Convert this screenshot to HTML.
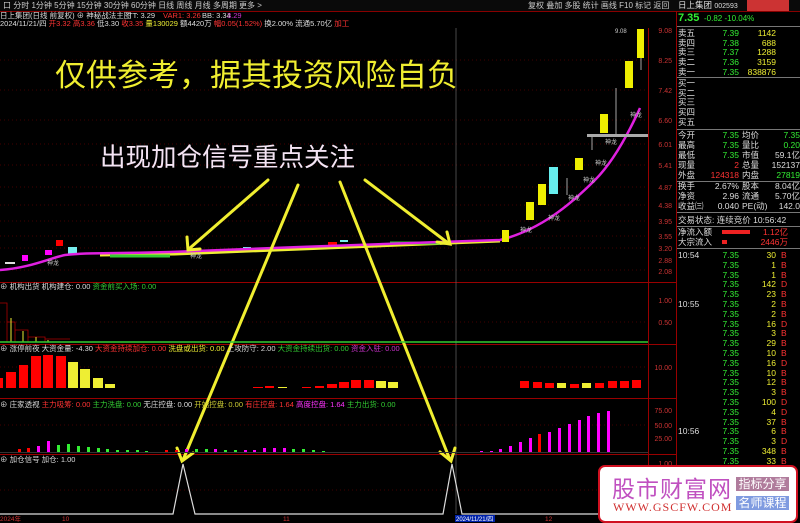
<!DOCTYPE html>
<html><head><meta charset="utf-8"><style>
*{margin:0;padding:0}
body{width:800px;height:522px;background:#000;overflow:hidden;position:relative;font-family:"Liberation Sans","Noto Sans CJK SC",sans-serif}
svg{position:absolute;left:0;top:0}
text{font-family:"Liberation Sans","Noto Sans CJK SC",sans-serif}
.w{position:absolute;left:677px;width:123px;height:10px;line-height:10px;font-size:8.5px;color:#ddd;white-space:nowrap}
.w span{position:absolute}
.l{left:1px}
.p{right:61px;color:#3e3}
.v{right:24px;color:#ee3}
.f{left:104px;color:#f33}
.l2{left:65px}
.v2{right:0;}
.hl{position:absolute;left:677px;width:123px;height:1px;background:#777}
</style></head><body>
<svg width="800" height="522" viewBox="0 0 800 522">
<rect x="0" y="0" width="800" height="11" fill="#0a0a0a"/>
<g font-size="8" fill="#ccc">
<text x="3" y="8">口 分时  1分钟  5分钟  15分钟  30分钟  60分钟  日线  周线  月线  多周期  更多 &gt;</text>
<text x="528" y="8">复权  叠加  多股  统计  画线  F10  标记  返回</text>
</g>
<line x1="0" y1="11.5" x2="800" y2="11.5" stroke="#800" stroke-width="1"/>
<g font-size="7.5">
<text x="0" y="18" fill="#ddd">日上集团(日线 前复权) ⊕ 神秘战法主图</text>
<text x="128" y="18" fill="#ddd">TT: 3.29</text><text x="163" y="18" fill="#f33">VAR1: 3.26</text><text x="202" y="18" fill="#ddd">BB: 3.34</text><text x="227" y="18" fill="#c3c">3.29</text>
<text x="0" y="26" fill="#ddd">2024/11/21/四 <tspan fill="#f33">开3.32 高3.36</tspan> 低3.30 <tspan fill="#f33">收3.35</tspan> <tspan fill="#ee3">量130029</tspan> 额4420万 <tspan fill="#f33">幅0.05(1.52%)</tspan> 换2.00% 流通5.70亿 <tspan fill="#f33">加工</tspan></text>
</g>
<g stroke="#5a0000" stroke-width="0.8" stroke-dasharray="1,3">
<line x1="0" y1="60" x2="648" y2="60"/><line x1="0" y1="90" x2="648" y2="90"/><line x1="0" y1="120" x2="648" y2="120"/><line x1="0" y1="144" x2="648" y2="144"/><line x1="0" y1="165" x2="648" y2="165"/><line x1="0" y1="187" x2="648" y2="187"/><line x1="0" y1="205" x2="648" y2="205"/><line x1="0" y1="221" x2="648" y2="221"/><line x1="0" y1="236" x2="648" y2="236"/><line x1="0" y1="248" x2="648" y2="248"/><line x1="0" y1="270" x2="648" y2="270"/>
<line x1="0" y1="322" x2="648" y2="322"/><line x1="0" y1="367" x2="648" y2="367"/><line x1="0" y1="425" x2="648" y2="425"/><line x1="0" y1="490" x2="648" y2="490"/>
</g>
<g stroke="#900" stroke-width="1">
<line x1="0" y1="282.5" x2="676" y2="282.5"/><line x1="0" y1="344.5" x2="676" y2="344.5"/><line x1="0" y1="398.5" x2="676" y2="398.5"/><line x1="0" y1="454.5" x2="676" y2="454.5"/>
<line x1="648.5" y1="28" x2="648.5" y2="515"/><line x1="676.5" y1="11" x2="676.5" y2="522"/>
</g>
<line x1="456" y1="28" x2="456" y2="514" stroke="#666" stroke-width="0.7"/>
<g font-size="7" fill="#c33" text-anchor="end">
<text x="672" y="33">9.08</text><text x="672" y="63">8.25</text><text x="672" y="93">7.42</text><text x="672" y="123">6.60</text><text x="672" y="147">6.01</text><text x="672" y="168">5.41</text><text x="672" y="190">4.87</text><text x="672" y="208">4.38</text><text x="672" y="224">3.95</text><text x="672" y="239">3.55</text><text x="672" y="251">3.20</text><text x="672" y="263">2.88</text><text x="672" y="274">2.08</text>
<text x="672" y="303">1.00</text><text x="672" y="325">0.50</text><text x="672" y="370">10.00</text><text x="672" y="413">75.00</text><text x="672" y="428">50.00</text><text x="672" y="441">25.00</text><text x="672" y="466">1.00</text>
</g>
<g>
<rect x="22" y="255" width="6" height="6" fill="#f0f"/><rect x="45" y="250" width="7" height="5" fill="#f0f"/><rect x="56" y="240" width="7" height="6" fill="#f00"/><rect x="68" y="247" width="9" height="7" fill="#7ee"/><rect x="230" y="249" width="8" height="4" fill="#f00"/><rect x="243" y="247" width="8" height="4" fill="#7ee"/><rect x="328" y="242" width="9" height="4" fill="#f00"/><rect x="340" y="240" width="8" height="2" fill="#7ee"/>
<path d="M100 255 L175 254 L500 241" stroke="#ee3" stroke-width="3" fill="none"/>
<path d="M110 256 L170 256 M390 243 L440 243" stroke="#3c3" stroke-width="3"/>
<rect x="5" y="262" width="10" height="2" fill="#ddd"/>
</g>
<path d="M0 270 C30 268 50 258 65 255 C90 252 110 254 170 252 L300 247 L440 242 L500 240 C540 230 570 205 595 180 C615 160 630 130 640 108" stroke="#e020e0" stroke-width="2.5" fill="none"/>
<g fill="#ee0">
<rect x="502" y="230" width="7" height="12"/><rect x="526" y="202" width="8" height="18"/><rect x="538" y="184" width="8" height="21"/><rect x="575" y="158" width="8" height="12"/><rect x="600" y="114" width="8" height="19"/><rect x="625" y="61" width="8" height="27"/><rect x="637" y="29" width="7" height="29"/>
</g>
<rect x="549" y="167" width="9" height="27" fill="#6ee"/>
<rect x="587" y="134" width="61" height="3" fill="#aaa"/>
<g stroke="#ccc" stroke-width="0.8"><line x1="616" y1="88" x2="616" y2="134"/><line x1="567" y1="178" x2="567" y2="195"/><line x1="592" y1="137" x2="592" y2="150"/><line x1="641" y1="58" x2="641" y2="70"/></g>
<text x="615" y="33" font-size="6" fill="#ccc">9.08</text>
<g font-size="6" fill="#ccc"><text x="520" y="232">神龙</text><text x="548" y="220">神龙</text><text x="568" y="200">神龙</text><text x="583" y="182">神龙</text><text x="595" y="165">神龙</text><text x="605" y="144">神龙</text><text x="630" y="117">神龙</text><text x="47" y="265">神龙</text><text x="190" y="258">神龙</text></g>
<text x="55" y="86" font-size="31" fill="#f0ee30">仅供参考，据其投资风险自负</text>
<text x="100" y="166" font-size="25.5" fill="#f4e4f4">出现加仓信号重点关注</text>
<g stroke="#f0ee30" stroke-width="3" fill="none" stroke-linecap="round">
<line x1="268" y1="180" x2="190" y2="248"/><path d="M187 237 L188 250 L200 249"/>
<line x1="298" y1="185" x2="183" y2="460"/><path d="M177 448 L182 461 L193 453"/>
<line x1="340" y1="182" x2="450" y2="460"/><path d="M440 452 L451 461 L455 448"/>
<line x1="365" y1="180" x2="448" y2="243"/><path d="M437 242 L450 244 L447 232"/>
</g>
<g font-size="7.5"><text x="0" y="289" fill="#ddd">⊕ 机构出货  机构建仓: 0.00 <tspan fill="#3c3">资金前买入场: 0.00</tspan></text></g>
<g stroke="#a00" fill="none" stroke-width="0.8"><path d="M0 303 H7 V342 M7 322 H15 V342 M15 330 H28 V342 M28 337 H45 V342 M45 339 H70"/></g>
<g stroke="#ee3" stroke-width="1"><line x1="11" y1="318" x2="11" y2="342"/><line x1="23" y1="331" x2="23" y2="342"/><line x1="36" y1="337" x2="36" y2="342"/><line x1="48" y1="340" x2="48" y2="342"/></g>
<line x1="0" y1="342" x2="648" y2="342" stroke="#3c3" stroke-width="1.5"/>
<g font-size="7.5"><text x="0" y="351" fill="#ddd">⊕ 涨停前夜  大资金量: -4.30  <tspan fill="#f33">大资金持续加仓: 0.00</tspan> <tspan fill="#ee3">洗盘或出货: 0.00</tspan> <tspan fill="#ddd">上攻防守: 2.00</tspan> <tspan fill="#3c3">大资金持续出货: 0.00</tspan> <tspan fill="#c3c">资金入驻: 0.00</tspan></text></g>
<g fill="#f00"><rect x="0" y="378" width="3" height="10"/><rect x="6" y="372" width="10" height="16"/><rect x="19" y="365" width="9" height="23"/><rect x="31" y="356" width="10" height="32"/><rect x="43" y="355" width="10" height="33"/><rect x="56" y="356" width="10" height="32"/>
<rect x="253" y="387" width="10" height="1"/><rect x="265" y="386" width="9" height="2"/><rect x="302" y="387" width="9" height="1"/><rect x="315" y="386" width="9" height="2"/><rect x="327" y="384" width="10" height="4"/><rect x="339" y="382" width="10" height="6"/><rect x="351" y="380" width="10" height="8"/><rect x="364" y="380" width="10" height="8"/>
<rect x="520" y="381" width="9" height="7"/><rect x="533" y="382" width="9" height="6"/><rect x="545" y="383" width="9" height="5"/><rect x="570" y="384" width="9" height="4"/><rect x="595" y="383" width="9" height="5"/><rect x="608" y="381" width="9" height="7"/><rect x="620" y="381" width="9" height="7"/><rect x="632" y="380" width="9" height="8"/></g>
<g fill="#ee3"><rect x="68" y="362" width="10" height="26"/><rect x="80" y="369" width="10" height="19"/><rect x="93" y="378" width="10" height="10"/><rect x="105" y="384" width="10" height="4"/><rect x="278" y="387" width="9" height="1"/><rect x="376" y="381" width="10" height="7"/><rect x="388" y="382" width="10" height="6"/><rect x="557" y="383" width="9" height="5"/><rect x="582" y="383" width="9" height="5"/></g>
<g font-size="7.5"><text x="0" y="407" fill="#ddd">⊕ 庄家透视  <tspan fill="#f33">主力吸筹: 0.00</tspan> <tspan fill="#3c3">主力洗盘: 0.00</tspan>   <tspan fill="#ddd">无庄控盘: 0.00</tspan> <tspan fill="#cc3">开始控盘: 0.00</tspan> <tspan fill="#f33">有庄控盘: 1.64</tspan> <tspan fill="#f3f">高度控盘: 1.64</tspan> <tspan fill="#3c3">主力出货: 0.00</tspan></text></g>
<g>
<rect x="18" y="449" width="3" height="3" fill="#f00"/><rect x="27" y="448" width="3" height="4" fill="#f00"/><rect x="37" y="446" width="3" height="6" fill="#f0f"/><rect x="47" y="441" width="3" height="11" fill="#f0f"/><rect x="57" y="445" width="3" height="7" fill="#3e3"/><rect x="67" y="444" width="3" height="8" fill="#3e3"/><rect x="77" y="446" width="3" height="6" fill="#3e3"/><rect x="87" y="447" width="3" height="5" fill="#3e3"/><rect x="97" y="448" width="3" height="4" fill="#3e3"/><rect x="106" y="449" width="3" height="3" fill="#3e3"/><rect x="116" y="450" width="3" height="2" fill="#3e3"/><rect x="126" y="450" width="3" height="2" fill="#3e3"/><rect x="136" y="450" width="3" height="2" fill="#3e3"/><rect x="145" y="451" width="3" height="1" fill="#3e3"/>
<rect x="165" y="450" width="3" height="2" fill="#f00"/><rect x="175" y="450" width="3" height="2" fill="#f00"/><rect x="185" y="449" width="3" height="3" fill="#f0f"/><rect x="195" y="449" width="3" height="3" fill="#3e3"/><rect x="205" y="449" width="3" height="3" fill="#3e3"/><rect x="214" y="449" width="3" height="3" fill="#f0f"/><rect x="224" y="450" width="3" height="2" fill="#3e3"/><rect x="234" y="450" width="3" height="2" fill="#3e3"/><rect x="244" y="450" width="3" height="2" fill="#f0f"/><rect x="253" y="450" width="3" height="2" fill="#f0f"/><rect x="263" y="448" width="3" height="4" fill="#f0f"/><rect x="273" y="448" width="3" height="4" fill="#f0f"/><rect x="283" y="448" width="3" height="4" fill="#f0f"/><rect x="292" y="449" width="3" height="3" fill="#3e3"/><rect x="302" y="449" width="3" height="3" fill="#3e3"/><rect x="312" y="450" width="3" height="2" fill="#3e3"/><rect x="322" y="451" width="3" height="1" fill="#3e3"/>
<rect x="480" y="451" width="3" height="1" fill="#f0f"/><rect x="490" y="451" width="3" height="1" fill="#f0f"/><rect x="499" y="449" width="3" height="3" fill="#f0f"/><rect x="509" y="446" width="3" height="6" fill="#f0f"/><rect x="519" y="442" width="3" height="10" fill="#f0f"/><rect x="529" y="438" width="3" height="14" fill="#f0f"/><rect x="538" y="434" width="3" height="18" fill="#f00"/><rect x="548" y="432" width="3" height="20" fill="#f0f"/><rect x="558" y="428" width="3" height="24" fill="#f0f"/><rect x="568" y="424" width="3" height="28" fill="#f0f"/><rect x="578" y="420" width="3" height="32" fill="#f0f"/><rect x="587" y="416" width="3" height="36" fill="#f0f"/><rect x="597" y="413" width="3" height="39" fill="#f0f"/><rect x="607" y="411" width="3" height="41" fill="#f0f"/>
</g>
<line x1="0" y1="452.5" x2="648" y2="452.5" stroke="#333"/>
<text x="0" y="462" font-size="7.5" fill="#ddd">⊕ 加仓信号  加仓: 1.00</text>
<path d="M0 514 L173 514 L183 464 L195 514 L443 514 L452 464 L462 514 L648 514" stroke="#ddd" stroke-width="1.2" fill="none"/>
<g font-size="6.5" fill="#c33"><text x="0" y="521">2024年</text><text x="62" y="521">10</text><text x="283" y="521">11</text><text x="545" y="521">12</text></g>
<rect x="455" y="515" width="40" height="7" fill="#0022aa"/><text x="456" y="521" font-size="6" fill="#fff">2024/11/21/四</text>
</svg>

<!-- right panel -->
<div style="position:absolute;left:747px;top:0;width:42px;height:11px;background:#c33"></div>
<div class="w" style="top:0"><span class="l">日上集团 <span style="position:static;font-size:7px">002593</span></span></div>
<div class="w" style="top:12px;height:13px;line-height:13px"><span class="l" style="color:#3e3;font-size:11px;font-weight:bold">7.35</span><span style="left:27px;color:#3e3;font-size:8px">-0.82 -10.04%</span></div>
<div class="hl" style="top:26px"></div>

<div class="w" style="top:28px"><span class="l">卖五</span><span class="p">7.39</span><span class="v">1142</span></div>
<div class="w" style="top:38px"><span class="l">卖四</span><span class="p">7.38</span><span class="v">688</span></div>
<div class="w" style="top:47px"><span class="l">卖三</span><span class="p">7.37</span><span class="v">1288</span></div>
<div class="w" style="top:57px"><span class="l">卖二</span><span class="p">7.36</span><span class="v">3159</span></div>
<div class="w" style="top:67px"><span class="l">卖一</span><span class="p">7.35</span><span class="v">838876</span></div>
<div class="hl" style="top:77px"></div>
<div class="w" style="top:78px"><span class="l">买一</span></div>
<div class="w" style="top:88px"><span class="l">买二</span></div>
<div class="w" style="top:97px"><span class="l">买三</span></div>
<div class="w" style="top:107px"><span class="l">买四</span></div>
<div class="w" style="top:117px"><span class="l">买五</span></div>
<div class="hl" style="top:129px"></div>
<div class="w" style="top:130px"><span class="l">今开</span><span class="p">7.35</span><span class="l2">均价</span><span class="v2" style="color:#3e3">7.35</span></div>
<div class="w" style="top:140px"><span class="l">最高</span><span class="p">7.35</span><span class="l2">量比</span><span class="v2" style="color:#3e3">0.20</span></div>
<div class="w" style="top:150px"><span class="l">最低</span><span class="p">7.35</span><span class="l2">市值</span><span class="v2">59.1亿</span></div>
<div class="w" style="top:160px"><span class="l">现量</span><span class="p" style="color:#f33">2</span><span class="l2">总量</span><span class="v2">152137</span></div>
<div class="w" style="top:170px"><span class="l">外盘</span><span class="p" style="color:#f33">124318</span><span class="l2">内盘</span><span class="v2" style="color:#3e3">27819</span></div>
<div class="hl" style="top:181px"></div>
<div class="w" style="top:181px"><span class="l">换手</span><span class="p" style="color:#ddd">2.67%</span><span class="l2">股本</span><span class="v2">8.04亿</span></div>
<div class="w" style="top:191px"><span class="l">净资</span><span class="p" style="color:#ddd">2.96</span><span class="l2">流通</span><span class="v2">5.70亿</span></div>
<div class="w" style="top:201px"><span class="l">收益㈢</span><span class="p" style="color:#ddd">0.040</span><span class="l2">PE(动)</span><span class="v2">142.0</span></div>
<div class="hl" style="top:212px"></div>
<div class="w" style="top:215px"><span class="l">交易状态: 连续竞价 10:56:42</span></div>
<div class="hl" style="top:226px"></div>
<div class="w" style="top:227px"><span class="l">净流入额</span><span style="left:45px;top:3px;width:28px;height:4px;background:#e22"></span><span class="v2" style="color:#f33;right:12px">1.12亿</span></div>
<div class="w" style="top:237px"><span class="l">大宗流入</span><span style="left:45px;top:3px;width:5px;height:4px;background:#e22"></span><span class="v2" style="color:#f33;right:12px">2446万</span></div>
<div class="hl" style="top:248px"></div>

<div class="w" style="top:250px"><span class="l">10:54</span><span class="p">7.35</span><span class="v">30</span><span class="f">B</span></div>
<div class="w" style="top:260px"><span class="p">7.35</span><span class="v">1</span><span class="f">B</span></div>
<div class="w" style="top:270px"><span class="p">7.35</span><span class="v">1</span><span class="f">B</span></div>
<div class="w" style="top:279px"><span class="p">7.35</span><span class="v">142</span><span class="f">D</span></div>
<div class="w" style="top:289px"><span class="p">7.35</span><span class="v">23</span><span class="f">B</span></div>
<div class="w" style="top:299px"><span class="l">10:55</span><span class="p">7.35</span><span class="v">2</span><span class="f">B</span></div>
<div class="w" style="top:309px"><span class="p">7.35</span><span class="v">2</span><span class="f">B</span></div>
<div class="w" style="top:319px"><span class="p">7.35</span><span class="v">16</span><span class="f">D</span></div>
<div class="w" style="top:328px"><span class="p">7.35</span><span class="v">3</span><span class="f">B</span></div>
<div class="w" style="top:338px"><span class="p">7.35</span><span class="v">29</span><span class="f">B</span></div>
<div class="w" style="top:348px"><span class="p">7.35</span><span class="v">10</span><span class="f">B</span></div>
<div class="w" style="top:358px"><span class="p">7.35</span><span class="v">16</span><span class="f">D</span></div>
<div class="w" style="top:368px"><span class="p">7.35</span><span class="v">10</span><span class="f">B</span></div>
<div class="w" style="top:377px"><span class="p">7.35</span><span class="v">12</span><span class="f">B</span></div>
<div class="w" style="top:387px"><span class="p">7.35</span><span class="v">3</span><span class="f">B</span></div>
<div class="w" style="top:397px"><span class="p">7.35</span><span class="v">100</span><span class="f">D</span></div>
<div class="w" style="top:407px"><span class="p">7.35</span><span class="v">4</span><span class="f">D</span></div>
<div class="w" style="top:417px"><span class="p">7.35</span><span class="v">37</span><span class="f">B</span></div>
<div class="w" style="top:426px"><span class="l">10:56</span><span class="p">7.35</span><span class="v">6</span><span class="f">B</span></div>
<div class="w" style="top:436px"><span class="p">7.35</span><span class="v">3</span><span class="f">D</span></div>
<div class="w" style="top:446px"><span class="p">7.35</span><span class="v">348</span><span class="f">B</span></div>
<div class="w" style="top:456px"><span class="p">7.35</span><span class="v">33</span><span class="f">B</span></div>
<div class="w" style="top:466px"><span class="p">7.35</span><span class="v">5</span><span class="f">B</span></div>
<div class="w" style="top:475px"><span class="p">7.35</span><span class="v">12</span><span class="f">D</span></div>
<div class="w" style="top:485px"><span class="p">7.35</span><span class="v">8</span><span class="f">B</span></div>
<div class="w" style="top:495px"><span class="p">7.35</span><span class="v">20</span><span class="f">B</span></div>
<div class="w" style="top:505px"><span class="p">7.35</span><span class="v">1</span><span class="f">B</span></div>

<div style="position:absolute;left:598px;top:465px;width:196px;height:54px;background:#fff;border:2px solid #d01020;border-radius:7px">
<div style="position:absolute;left:12px;top:3px;font-size:23px;color:#c050c0;letter-spacing:1px">股市财富网</div>
<div style="position:absolute;left:13px;top:33px;font-size:12px;color:#d03030;font-family:'Liberation Serif',serif;letter-spacing:1px">WWW.GSCFW.COM</div>
<div style="position:absolute;left:136px;top:10px;width:53px;height:14px;background:#b07c9c;color:#fff;font-size:12px;line-height:14px;text-align:center">指标分享</div>
<div style="position:absolute;left:136px;top:29px;width:53px;height:14px;background:#7f9be0;color:#fff;font-size:12px;line-height:14px;text-align:center">名师课程</div>
</div>
</body></html>
